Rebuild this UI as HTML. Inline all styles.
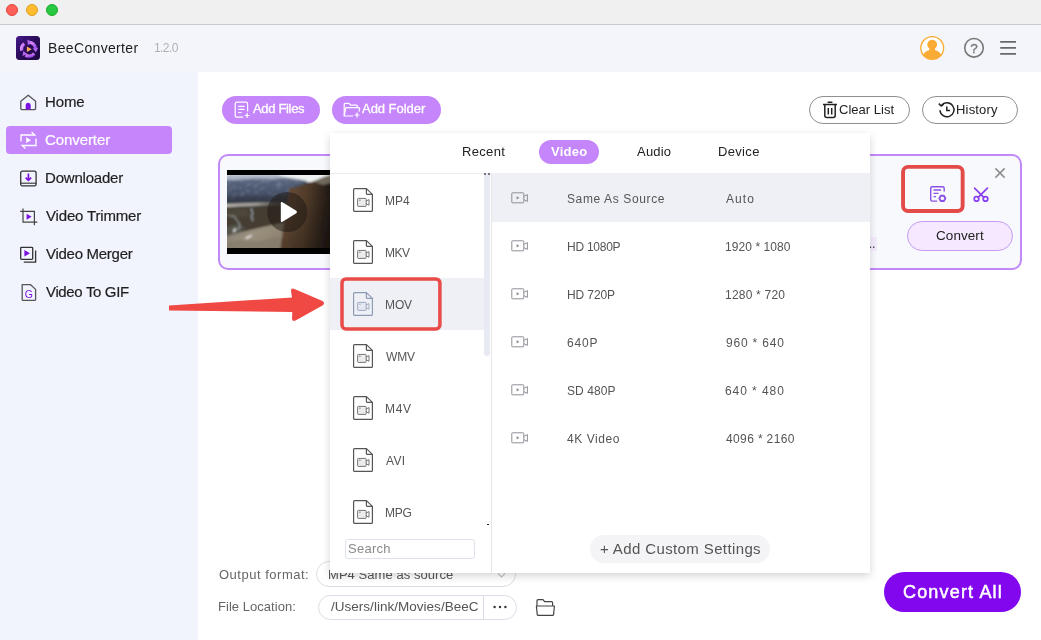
<!DOCTYPE html>
<html lang="en">
<head>
<meta charset="utf-8">
<title>BeeConverter</title>
<style>
*{box-sizing:border-box;margin:0;padding:0}
html,body{width:1041px;height:640px;overflow:hidden;background:#fff}
body{position:relative;font-family:"Liberation Sans",sans-serif;color:#222}
.a{position:absolute}
svg.g{will-change:transform}
.t{position:absolute;white-space:nowrap;line-height:20px;height:20px;will-change:transform}
#titlebar{left:0;top:0;width:1041px;height:25px;background:#f0f0f0;border-bottom:1px solid #c9c9ce}
.tl{position:absolute;top:4px;width:12px;height:12px;border-radius:50%}
#header{left:0;top:25px;width:1041px;height:47px;background:#f4f5fa}
#sidebar{left:0;top:72px;width:198px;height:568px;background:#f2f4fd}
#main{left:198px;top:72px;width:843px;height:568px;background:#fff}
.pill{position:absolute;border-radius:14px;height:28px}
.btnp{background:#c586fb}
.btno{background:#fff;border:1px solid #8f8f8f}
#card{left:218px;top:154px;width:804px;height:116px;border:2px solid #c388f8;border-radius:10px;background:#f8f9fc}
#popup{left:330px;top:133px;width:540px;height:440px;background:#fff;box-shadow:0 3px 8px rgba(0,0,0,.17)}
</style>
</head>
<body>
<div id="titlebar" class="a">
  <div class="tl" style="left:6px;background:#fe5f57;border:0.5px solid #e0443e"></div>
  <div class="tl" style="left:26px;background:#febc2e;border:0.5px solid #dea123"></div>
  <div class="tl" style="left:46px;background:#28c840;border:0.5px solid #1aab29"></div>
</div>
<div id="header" class="a"></div>
<div id="sidebar" class="a"></div>
<div id="main" class="a"></div>
<svg class="a" style="left:16px;top:36px" width="24" height="24" viewBox="0 0 24 24">
  <defs>
    <linearGradient id="lg0" x1="0" y1="0" x2="1" y2="1"><stop offset="0" stop-color="#45188a"/><stop offset="0.5" stop-color="#2a0c58"/><stop offset="1" stop-color="#1c0840"/></linearGradient>
    <linearGradient id="lg1" x1="0" y1="0" x2="1" y2="1"><stop offset="0" stop-color="#ee9cff"/><stop offset="1" stop-color="#9448e4"/></linearGradient>
  </defs>
  <rect width="24" height="24" rx="3.500" fill="url(#lg0)"/>
  <g transform="translate(0.3 0.6)"><g fill="none" stroke="url(#lg1)" stroke-width="3.300">
    <path d="M12.600 5.800 A6.800 6.800 0 0 1 19.200 11.600"/>
    <path d="M17.900 16.800 A6.800 6.800 0 0 1 9.200 18.600"/>
    <path d="M5.400 14 A6.800 6.800 0 0 1 8 7.200"/>
  </g>
  <path d="M11 3 L15.200 5.400 L11.600 8.600 Z M21.800 11.200 L19.600 15.600 L16.400 12 Z M6.200 19.400 L7 14.400 L11 17.400 Z" fill="#b565f0"/>
  <path d="M10.600 9.900 L15.400 12.600 L10.600 15.300 Z" fill="#ffae5a"/></g>
</svg>
<div class="t" style="left:48px;top:37.8px;font-size:14px;color:#1c1c1c;letter-spacing:0.34px;">BeeConverter</div>
<div class="t" style="left:154px;top:37.8px;font-size:12px;color:#b0b0b5;letter-spacing:-0.57px;">1.2.0</div>
<svg class="a" style="left:919px;top:35px" width="26" height="26" viewBox="0 0 26 26">
  <defs><clipPath id="uc"><circle cx="13.2" cy="13" r="11.4"/></clipPath></defs>
  <circle cx="13.2" cy="13" r="11.4" fill="#fff"/>
  <g clip-path="url(#uc)" fill="#f9ab35">
    <circle cx="13.2" cy="9.600" r="4.900"/>
    <path d="M10.400 12 H16 V15 C19.500 16 23 18 24.400 26 H2 C3.400 18 6.900 16 10.400 15 Z"/>
  </g>
  <circle cx="13.2" cy="13" r="11.4" fill="none" stroke="#f9ab35" stroke-width="1.350"/>
</svg>
<svg class="a g" style="left:963px;top:37px" width="22" height="22" viewBox="0 0 22 22">
  <circle cx="11" cy="10.8" r="9.3" fill="none" stroke="#777" stroke-width="1.6"/>
  <text x="11" y="15.700" font-family="Liberation Sans, sans-serif" font-size="13.5" fill="#777" stroke="#777" stroke-width="0.300" text-anchor="middle">?</text>
</svg>
<svg class="a" style="left:999px;top:39px" width="19" height="18" viewBox="0 0 19 18">
  <path d="M1.2 2.8 H17 M1.2 8.8 H17 M1.2 14.8 H17" stroke="#686868" stroke-width="1.800"/>
</svg>
<div class="a" style="left:6px;top:126px;width:166px;height:28px;border-radius:4px;background:#c586fb"></div>
<div class="t" style="left:45px;top:92.0px;font-size:15px;color:#1f1f1f;letter-spacing:-0.10px;-webkit-text-stroke:0.2px #1f1f1f;">Home</div>
<div class="t" style="left:45px;top:130.0px;font-size:15px;color:#fff;letter-spacing:-0.09px;-webkit-text-stroke:0.2px #fff;">Converter</div>
<div class="t" style="left:45px;top:168.0px;font-size:15px;color:#1f1f1f;letter-spacing:-0.20px;-webkit-text-stroke:0.2px #1f1f1f;">Downloader</div>
<div class="t" style="left:46px;top:206.0px;font-size:15px;color:#1f1f1f;letter-spacing:-0.17px;-webkit-text-stroke:0.2px #1f1f1f;">Video Trimmer</div>
<div class="t" style="left:46px;top:244.0px;font-size:15px;color:#1f1f1f;letter-spacing:-0.28px;-webkit-text-stroke:0.2px #1f1f1f;">Video Merger</div>
<div class="t" style="left:46px;top:282.0px;font-size:15px;color:#1f1f1f;letter-spacing:-0.35px;-webkit-text-stroke:0.2px #1f1f1f;">Video To GIF</div>
<svg class="a" style="left:19px;top:93px" width="19" height="19" viewBox="0 0 19 19" fill="none">
  <path d="M1.8 8.2 L9.2 2.2 L16.6 8.2 V15.6 Q16.6 16.6 15.6 16.6 H2.8 Q1.8 16.6 1.8 15.6 Z" stroke="#555" stroke-width="1.3" stroke-linejoin="round"/>
  <path d="M6.7 16.6 V12.2 A2.5 2.5 0 0 1 11.7 12.2 V16.6 Z" fill="#7a12e0"/>
</svg>
<svg class="a" style="left:19px;top:130px" width="19" height="20" viewBox="0 0 19 20" fill="none" stroke="#fff" stroke-width="1.3">
  <path d="M2 11.5 V5 H15.5 M12.6 2 L15.8 5 L12.6 5"/>
  <path d="M17 8.5 V15.5 H3.5 M6.4 18.5 L3.2 15.5 L6.4 15.5"/>
  <path d="M7.2 7.3 L12 10.2 L7.2 13.1 Z" fill="#fff" stroke="none"/>
</svg>
<svg class="a" style="left:19px;top:169px" width="19" height="19" viewBox="0 0 19 19" fill="none">
  <rect x="1.7" y="2.2" width="15.4" height="14.6" rx="1.6" stroke="#333" stroke-width="1.3"/>
  <path d="M1.7 14.2 H17.1" stroke="#333" stroke-width="1.1"/>
  <path d="M9.4 4.6 V11 M6.6 8.6 L9.4 11.4 L12.2 8.6" stroke="#7a12e0" stroke-width="1.7"/>
</svg>
<svg class="a" style="left:19px;top:207px" width="20" height="20" viewBox="0 0 20 20" fill="none">
  <path d="M4 1.5 V15.2 H18.3 M1.2 4.3 H15.4 V18.2" stroke="#444" stroke-width="1.2"/>
  <path d="M7.6 6.8 L12.6 9.8 L7.6 12.8 Z" fill="#7a12e0"/>
</svg>
<svg class="a" style="left:19px;top:245px" width="19" height="19" viewBox="0 0 19 19" fill="none">
  <rect x="1.7" y="2.3" width="12" height="12" rx="0.8" stroke="#333" stroke-width="1.3"/>
  <path d="M16.6 5.5 V17.2 H4.8" stroke="#333" stroke-width="1.3"/>
  <path d="M5.4 5 L11 8.3 L5.4 11.6 Z" fill="#7a12e0"/>
</svg>
<svg class="a g" style="left:20px;top:283px" width="18" height="19" viewBox="0 0 18 19" fill="none">
  <path d="M2.2 1.7 H10.6 L15.6 6.4 V16.4 Q15.6 17.4 14.6 17.4 H3.2 Q2.2 17.4 2.2 16.4 Z" stroke="#555" stroke-width="1.3" stroke-linejoin="round"/>
  <text x="8.9" y="14.6" font-family="Liberation Sans, sans-serif" font-size="10.5" fill="#7a12e0" stroke="none" text-anchor="middle">G</text>
</svg>
<div class="pill btnp" style="left:222px;top:96px;width:98px"></div>
<div class="pill btnp" style="left:332px;top:96px;width:109px"></div>
<div class="pill btno" style="left:809px;top:96px;width:101px"></div>
<div class="pill btno" style="left:922px;top:96px;width:96px"></div>
<div class="t" style="left:253px;top:99.4px;font-size:13px;color:#fff;letter-spacing:-0.33px;-webkit-text-stroke:0.3px #fff;">Add Files</div>
<div class="t" style="left:362px;top:99.4px;font-size:13px;color:#fff;letter-spacing:-0.03px;-webkit-text-stroke:0.3px #fff;">Add Folder</div>
<div class="t" style="left:839px;top:99.8px;font-size:13px;color:#222;letter-spacing:0.02px;">Clear List</div>
<div class="t" style="left:956px;top:99.8px;font-size:13px;color:#222;letter-spacing:0.18px;">History</div>
<svg class="a" style="left:234px;top:101px" width="17" height="18" viewBox="0 0 17 18" fill="none" stroke="#fff" stroke-width="1.2">
  <path d="M9.2 16.2 H3 Q1.2 16.2 1.2 14.4 V3 Q1.2 1.2 3 1.2 H11.8 Q13.6 1.2 13.6 3 V10.4"/>
  <path d="M4.2 5.3 H10.6 M4.2 8.4 H10.6 M4.2 11.5 H7.6"/>
  <path d="M13.2 12 V17 M10.7 14.5 H15.7"/>
</svg>
<svg class="a" style="left:343px;top:102px" width="18" height="16" viewBox="0 0 18 16" fill="none" stroke="#fff" stroke-width="1.2" stroke-linejoin="round">
  <path d="M1.2 13.8 V2.4 Q1.2 1.4 2.2 1.4 H6 L7.6 3.2 H13.4 Q14.4 3.2 14.4 4.2 V5.6"/>
  <path d="M10.2 14 H1.2 L2.6 6.6 Q2.8 5.6 3.8 5.6 H15.6 Q16.8 5.6 16.6 6.6 L16 9.6"/>
  <path d="M14 10.6 V15.4 M11.6 13 H16.4"/>
</svg>
<svg class="a" style="left:822px;top:101px" width="16" height="18" viewBox="0 0 16 18" fill="none" stroke="#222" stroke-width="1.500">
  <path d="M1 3.6 H15 M5.6 1.2 H10.4"/>
  <path d="M2.8 3.6 V14.6 Q2.8 16.6 4.8 16.6 H11.2 Q13.2 16.6 13.2 14.6 V3.6"/>
  <path d="M6.3 7 V13.4 M9.7 7 V13.4"/>
</svg>
<svg class="a" style="left:938px;top:101px" width="18" height="18" viewBox="0 0 18 18" fill="none" stroke="#222" stroke-width="1.500">
  <path d="M3.4 4.6 A7 7 0 1 1 2 9.2"/>
  <path d="M0.8 2.6 L3.2 5 L5.8 3.2" />
  <path d="M8.8 5.4 V9.6 H12"/>
</svg>
<div id="card" class="a"></div>
<svg class="a" style="left:227px;top:170px" width="110" height="84" viewBox="0 0 110 84">
  <defs>
    <linearGradient id="mt" x1="0" y1="0" x2="0" y2="1"><stop offset="0" stop-color="#8a94aa"/><stop offset="0.22" stop-color="#55617a"/><stop offset="0.7" stop-color="#434e64"/><stop offset="1" stop-color="#343c49"/></linearGradient>
    <linearGradient id="cl" x1="0" y1="0" x2="1" y2="0.12"><stop offset="0" stop-color="#4e3b2c"/><stop offset="0.22" stop-color="#684d37"/><stop offset="0.5" stop-color="#503b2a"/><stop offset="0.78" stop-color="#2a2019"/><stop offset="1" stop-color="#15110e"/></linearGradient>
    <linearGradient id="cd" x1="0" y1="0" x2="0" y2="1"><stop offset="0" stop-color="#000" stop-opacity="0"/><stop offset="1" stop-color="#000" stop-opacity=".22"/></linearGradient>
    <linearGradient id="sl" x1="0" y1="0" x2="1" y2="0.6"><stop offset="0" stop-color="#77736a"/><stop offset="0.5" stop-color="#9a907e"/><stop offset="1" stop-color="#8b806e"/></linearGradient>
    <linearGradient id="bd" x1="0" y1="0" x2="1" y2="0"><stop offset="0" stop-color="#b9b5ac"/><stop offset="0.55" stop-color="#a29e96"/><stop offset="0.75" stop-color="#6a665e"/><stop offset="1" stop-color="#4c4942"/></linearGradient>
    <filter id="bl" x="-5%" y="-5%" width="110%" height="110%"><feGaussianBlur stdDeviation="1.05"/></filter>
    <filter id="nz" x="0" y="0" width="100%" height="100%"><feTurbulence type="fractalNoise" baseFrequency="0.22 0.3" numOctaves="3" seed="11"/><feColorMatrix type="matrix" values="0 0 0 0 0.85  0 0 0 0 0.88  0 0 0 0 0.95  1.6 0 0 0 -0.78"/></filter>
    <filter id="nd" x="0" y="0" width="100%" height="100%"><feTurbulence type="fractalNoise" baseFrequency="0.5 0.12" numOctaves="2" seed="3"/><feColorMatrix type="matrix" values="0 0 0 0 0.05  0 0 0 0 0.03  0 0 0 0 0.02  1.5 0 0 0 -0.7"/></filter>
    <clipPath id="tc"><rect x="0" y="5" width="110" height="73"/></clipPath>
    <clipPath id="mc"><path d="M-4 4 L58 4 L80 11 L62 19 L61 33 L-4 34 Z"/></clipPath>
    <clipPath id="cc"><path d="M53 84 L55 66 L57 53 L60.600 32.400 L62 20 L62.500 17.500 L64 18.500 L65.500 17 L67 18 L75 15.200 L87.400 11 L97 7 L102.500 5.600 L114 3 L114 84 Z"/></clipPath>
  </defs>
  <rect width="110" height="84" fill="#000"/>
  <g clip-path="url(#tc)"><g filter="url(#bl)">
    <rect x="-4" y="2" width="118" height="80" fill="#414a5c"/>
    <rect x="-4" y="2" width="118" height="10" fill="#eef2f2"/>
    <path d="M-4 6.500 L20 5.500 L45 5.500 L56 7 L70 9 L80.500 11 L62.600 18.600 L61 33 L-4 34 Z" fill="url(#mt)"/>
    <path d="M-4 4 L50 4 L58 7.500 L44 9 L26 8.500 L10 10 L-4 10.500 Z" fill="#b3bbca" opacity=".85"/>
    <g clip-path="url(#mc)"><rect x="0" y="5" width="82" height="24" filter="url(#nz)" opacity=".42"/></g>
    <path d="M-4 27 L61 25 L61 33 L-4 34 Z" fill="#343b48" opacity=".7"/>
    <path d="M-4 34 L30 32.800 L42 32.600 L61 32.400 L61 35 L42 35 L-4 37.200 Z" fill="url(#bd)"/>
    <path d="M-4 37.500 L42 35.500 L61 35.500 L61 84 L-4 84 Z" fill="#443e33"/>
    <path d="M-4 40 L20 38 L22 46 L8 48 L-4 46 Z" fill="#565043" opacity=".5"/>
    <path d="M-4 66.500 L12 62.500 L36 57 L57 52.500 L58 84 L-4 84 Z" fill="url(#sl)"/>
    <path d="M-4 58 L8 54.500 L18 57 L14 61.500 L-4 66.500 Z" fill="#54544b"/>
    <path d="M-4 74 L12 70 L30 72 L52 66 L56 84 L-4 84 Z" fill="#857c6b" opacity=".8"/>
    <path d="M6 45 L9 49 L12 53 L13 57 L10 60" stroke="#a2aab0" stroke-width="1" fill="none"/>
    <path d="M24 38 L25.500 43 L24.500 47 L26 51" stroke="#98a0a6" stroke-width="1.300" fill="none"/>
    <path d="M1 45 L6 47" stroke="#8a9298" stroke-width=".9" fill="none"/>
    <path d="M8.500 58.500 L6.500 62" stroke="#e8eaea" stroke-width="1.700" fill="none"/>
    <path d="M18.600 68.500 L24.800 65.300" stroke="#ecebe8" stroke-width="1.500" fill="none"/>
    <g clip-path="url(#cc)">
      <rect x="50" y="0" width="64" height="84" fill="url(#cl)"/>
      <rect x="50" y="30" width="64" height="54" fill="url(#cd)"/>
      <rect x="52" y="10" width="60" height="70" filter="url(#nd)" opacity=".45"/>
      <path d="M86 11.500 L97 7 L102.500 5.600 L114 3 L114 14 L104 13 L96 15 Z" fill="#716a5e"/>
      <path d="M63 19 L61.500 33 L58 53 L55.500 68" stroke="#6b523c" stroke-width="1.400" fill="none" opacity=".8"/>
    </g>
  </g></g>
  <circle cx="60.200" cy="42" r="20" fill="#1c1512" opacity=".5"/>
  <path d="M53.800 33.200 Q53.800 31.300 55.500 32.200 L69.300 40.700 Q70.700 42 69.300 43.300 L55.500 51.800 Q53.800 52.700 53.800 50.800 Z" fill="#fff"/>
</svg>
<div class="a" style="left:862px;top:237px;width:15px;height:13.500px;background:#f5edfd"></div>
<div class="t" style="left:866px;top:235.2px;font-size:9px;color:#3a3a3a;letter-spacing:0.79px;font-weight:bold;">...</div>
<svg class="a" style="left:899px;top:163px" width="68" height="52" viewBox="0 0 68 52"><rect x="4.050" y="3.850" width="59.600" height="44.200" rx="5" fill="none" stroke="#e34b49" stroke-width="3.900"/></svg>
<svg class="a" style="left:929px;top:185px" width="19" height="19" viewBox="0 0 19 19" fill="none" stroke="#8b50e5" stroke-width="1.400">
  <path d="M8.200 16.100 H3.300 Q1.700 16.100 1.700 14.500 V3.400 Q1.700 1.800 3.300 1.800 H13.600 Q15.200 1.800 15.200 3.400 V6.600"/>
  <path d="M4.500 5 H12 M4.500 8.300 H9.500 M4.500 11.600 H7" stroke-width="1.300"/>
  <path d="M10.300 13.400 L11.800 10.800 H14.900 L16.400 13.400 L14.900 16 H11.800 Z" stroke-width="1.900" stroke-linejoin="round"/>
</svg>
<svg class="a" style="left:972px;top:186px" width="18" height="18" viewBox="0 0 18 18" fill="none" stroke="#8a40f0" stroke-width="1.700" stroke-linecap="round">
  <path d="M2.600 2.200 L11.800 11.400 M15.400 2.200 L6.200 11.400"/>
  <circle cx="4.500" cy="12.900" r="2.300"/>
  <circle cx="13.500" cy="12.900" r="2.300"/>
</svg>
<svg class="a" style="left:994px;top:167px" width="12" height="12" viewBox="0 0 12 12" fill="none" stroke="#8f8f8f" stroke-width="1.600">
  <path d="M1.400 1.400 L10.600 10.600 M10.600 1.400 L1.400 10.600"/>
</svg>
<div class="a" style="left:907px;top:220.500px;width:106px;height:30.500px;border-radius:16px;background:#f5e8ff;border:1px solid #c79cf0"></div>
<div class="t" style="left:936px;top:225.8px;font-size:13.5px;color:#222;letter-spacing:0.06px;">Convert</div>
<div class="t" style="left:219px;top:565.0px;font-size:13px;color:#666;letter-spacing:0.51px;">Output format:</div>
<div class="t" style="left:218px;top:597.0px;font-size:13px;color:#666;letter-spacing:0.04px;">File Location:</div>
<div class="a" style="left:315.500px;top:561px;width:200px;height:26px;border-radius:13px;border:1px solid #dcdce6;background:#fff"></div>
<div class="t" style="left:328px;top:565.0px;font-size:13px;color:#555;letter-spacing:0.06px;">MP4 Same as source</div>
<svg class="a" style="left:497px;top:572px" width="9" height="7" viewBox="0 0 9 7" fill="none" stroke="#c4c4c8" stroke-width="1.100"><path d="M1 1.500 L4.500 5 L8 1.500"/></svg>
<div class="a" style="left:318px;top:594.500px;width:199px;height:25px;border-radius:12.500px;border:1px solid #dcdce6;background:#fff"></div>
<div class="a" style="left:483px;top:595px;width:1px;height:24px;background:#dcdce6"></div>
<div class="t" style="left:331px;top:597.0px;font-size:13.5px;color:#555;letter-spacing:0.02px;">/Users/link/Movies/BeeC</div>
<svg class="a" style="left:492px;top:604px" width="16" height="6" viewBox="0 0 16 6" fill="#333"><circle cx="2.600" cy="3" r="1.200"/><circle cx="8" cy="3" r="1.200"/><circle cx="13.400" cy="3" r="1.200"/></svg>
<svg class="a" style="left:535px;top:598px" width="21" height="19" viewBox="0 0 21 19" fill="none" stroke="#444" stroke-width="1.200" stroke-linejoin="round">
  <path d="M2 8 V2.800 Q2 1.600 3.200 1.600 H8 L9.600 3.600 H16.400 Q17.600 3.600 17.600 4.800 V8"/>
  <path d="M1.400 8 H19.400 L18.600 16.400 Q18.500 17.400 17.500 17.400 H3.300 Q2.300 17.400 2.200 16.400 Z"/>
</svg>
<div class="a" style="left:884px;top:572px;width:137px;height:40px;border-radius:20px;background:#8206ee"></div>
<div class="t" style="left:903px;top:581.8px;font-size:18px;color:#fff;letter-spacing:1.17px;-webkit-text-stroke:0.5px #fff;">Convert All</div>
<svg class="a" style="left:160px;top:280px" width="175" height="50" viewBox="0 0 175 50">
  <path d="M9 25.500 L132 17.500 L131 11 Q131 7.500 134.500 9 L162.500 21 Q165.500 23.200 162.500 25.500 L135.500 40.500 Q132 42 132 38.500 L132.300 32 L9 30.500 Z" fill="#f04944"/>
</svg>
<div id="popup" class="a"></div>
<div class="a" style="left:330px;top:173px;width:540px;height:1px;background:#ececf0"></div>
<div class="t" style="left:462px;top:141.5px;font-size:13px;color:#222;letter-spacing:0.32px;">Recent</div>
<div class="a" style="left:539px;top:140px;width:60px;height:24px;border-radius:12px;background:#c586fb"></div>
<div class="t" style="left:551px;top:141.5px;font-size:13px;color:#fff;letter-spacing:0.25px;font-weight:bold;">Video</div>
<div class="t" style="left:637px;top:141.5px;font-size:13px;color:#222;letter-spacing:0.21px;">Audio</div>
<div class="t" style="left:718px;top:141.5px;font-size:13px;color:#222;letter-spacing:0.33px;">Device</div>
<div class="a" style="left:330px;top:278px;width:154px;height:52px;background:#eef0f6"></div>
<svg class="a" style="left:352px;top:187px" width="22" height="26" viewBox="0 0 22 26" fill="none" stroke="#555" stroke-width="1.200" stroke-linejoin="round">
  <path d="M2.600 1.600 H14.400 L20.400 7.400 V23.400 Q20.400 24.400 19.400 24.400 H2.600 Q1.600 24.400 1.600 23.400 V2.600 Q1.600 1.600 2.600 1.600 Z"/>
  <path d="M14.400 1.600 V6.400 Q14.400 7.400 15.400 7.400 H20.400"/>
  <rect x="5.600" y="11.400" width="8.600" height="8" rx="0.800" fill="#ececec" stroke-width="1" stroke-opacity=".8"/>
  <path d="M14.200 14 L17 12.600 V18.200 L14.200 16.800" stroke-width="1" stroke-opacity=".8"/>
  <path d="M7.200 13.200 H8.600" stroke-width="0.800"/>
</svg>
<div class="t" style="left:385px;top:190.8px;font-size:12px;color:#555;letter-spacing:-0.03px;">MP4</div>
<svg class="a" style="left:352px;top:239px" width="22" height="26" viewBox="0 0 22 26" fill="none" stroke="#555" stroke-width="1.200" stroke-linejoin="round">
  <path d="M2.600 1.600 H14.400 L20.400 7.400 V23.400 Q20.400 24.400 19.400 24.400 H2.600 Q1.600 24.400 1.600 23.400 V2.600 Q1.600 1.600 2.600 1.600 Z"/>
  <path d="M14.400 1.600 V6.400 Q14.400 7.400 15.400 7.400 H20.400"/>
  <rect x="5.600" y="11.400" width="8.600" height="8" rx="0.800" fill="#ececec" stroke-width="1" stroke-opacity=".8"/>
  <path d="M14.200 14 L17 12.600 V18.200 L14.200 16.800" stroke-width="1" stroke-opacity=".8"/>
  <path d="M7.200 13.200 H8.600" stroke-width="0.800"/>
</svg>
<div class="t" style="left:385px;top:242.8px;font-size:12px;color:#555;letter-spacing:-0.46px;">MKV</div>
<svg class="a" style="left:352px;top:291px" width="22" height="26" viewBox="0 0 22 26" fill="none" stroke="#8d9bb5" stroke-width="1.200" stroke-linejoin="round">
  <path d="M2.600 1.600 H14.400 L20.400 7.400 V23.400 Q20.400 24.400 19.400 24.400 H2.600 Q1.600 24.400 1.600 23.400 V2.600 Q1.600 1.600 2.600 1.600 Z"/>
  <path d="M14.400 1.600 V6.400 Q14.400 7.400 15.400 7.400 H20.400"/>
  <rect x="5.600" y="11.400" width="8.600" height="8" rx="0.800" fill="#e3e8f2" stroke-width="1" stroke-opacity=".8"/>
  <path d="M14.200 14 L17 12.600 V18.200 L14.200 16.800" stroke-width="1" stroke-opacity=".8"/>
  <path d="M7.200 13.200 H8.600" stroke-width="0.800"/>
</svg>
<div class="t" style="left:385px;top:294.8px;font-size:12px;color:#555;letter-spacing:-0.12px;">MOV</div>
<svg class="a" style="left:352px;top:343px" width="22" height="26" viewBox="0 0 22 26" fill="none" stroke="#555" stroke-width="1.200" stroke-linejoin="round">
  <path d="M2.600 1.600 H14.400 L20.400 7.400 V23.400 Q20.400 24.400 19.400 24.400 H2.600 Q1.600 24.400 1.600 23.400 V2.600 Q1.600 1.600 2.600 1.600 Z"/>
  <path d="M14.400 1.600 V6.400 Q14.400 7.400 15.400 7.400 H20.400"/>
  <rect x="5.600" y="11.400" width="8.600" height="8" rx="0.800" fill="#ececec" stroke-width="1" stroke-opacity=".8"/>
  <path d="M14.200 14 L17 12.600 V18.200 L14.200 16.800" stroke-width="1" stroke-opacity=".8"/>
  <path d="M7.200 13.200 H8.600" stroke-width="0.800"/>
</svg>
<div class="t" style="left:386px;top:346.8px;font-size:12px;color:#555;letter-spacing:-0.14px;">WMV</div>
<svg class="a" style="left:352px;top:395px" width="22" height="26" viewBox="0 0 22 26" fill="none" stroke="#555" stroke-width="1.200" stroke-linejoin="round">
  <path d="M2.600 1.600 H14.400 L20.400 7.400 V23.400 Q20.400 24.400 19.400 24.400 H2.600 Q1.600 24.400 1.600 23.400 V2.600 Q1.600 1.600 2.600 1.600 Z"/>
  <path d="M14.400 1.600 V6.400 Q14.400 7.400 15.400 7.400 H20.400"/>
  <rect x="5.600" y="11.400" width="8.600" height="8" rx="0.800" fill="#ececec" stroke-width="1" stroke-opacity=".8"/>
  <path d="M14.200 14 L17 12.600 V18.200 L14.200 16.800" stroke-width="1" stroke-opacity=".8"/>
  <path d="M7.200 13.200 H8.600" stroke-width="0.800"/>
</svg>
<div class="t" style="left:385px;top:398.8px;font-size:12px;color:#555;letter-spacing:0.70px;">M4V</div>
<svg class="a" style="left:352px;top:447px" width="22" height="26" viewBox="0 0 22 26" fill="none" stroke="#555" stroke-width="1.200" stroke-linejoin="round">
  <path d="M2.600 1.600 H14.400 L20.400 7.400 V23.400 Q20.400 24.400 19.400 24.400 H2.600 Q1.600 24.400 1.600 23.400 V2.600 Q1.600 1.600 2.600 1.600 Z"/>
  <path d="M14.400 1.600 V6.400 Q14.400 7.400 15.400 7.400 H20.400"/>
  <rect x="5.600" y="11.400" width="8.600" height="8" rx="0.800" fill="#ececec" stroke-width="1" stroke-opacity=".8"/>
  <path d="M14.200 14 L17 12.600 V18.200 L14.200 16.800" stroke-width="1" stroke-opacity=".8"/>
  <path d="M7.200 13.200 H8.600" stroke-width="0.800"/>
</svg>
<div class="t" style="left:386px;top:450.8px;font-size:12px;color:#555;letter-spacing:0.30px;">AVI</div>
<svg class="a" style="left:352px;top:499px" width="22" height="26" viewBox="0 0 22 26" fill="none" stroke="#555" stroke-width="1.200" stroke-linejoin="round">
  <path d="M2.600 1.600 H14.400 L20.400 7.400 V23.400 Q20.400 24.400 19.400 24.400 H2.600 Q1.600 24.400 1.600 23.400 V2.600 Q1.600 1.600 2.600 1.600 Z"/>
  <path d="M14.400 1.600 V6.400 Q14.400 7.400 15.400 7.400 H20.400"/>
  <rect x="5.600" y="11.400" width="8.600" height="8" rx="0.800" fill="#ececec" stroke-width="1" stroke-opacity=".8"/>
  <path d="M14.200 14 L17 12.600 V18.200 L14.200 16.800" stroke-width="1" stroke-opacity=".8"/>
  <path d="M7.200 13.200 H8.600" stroke-width="0.800"/>
</svg>
<div class="t" style="left:385px;top:502.8px;font-size:12px;color:#555;letter-spacing:-0.26px;">MPG</div>
<svg class="a" style="left:338px;top:275px" width="106" height="58" viewBox="0 0 106 58"><rect x="4" y="3.900" width="97.900" height="50" rx="4" fill="none" stroke="#e94b48" stroke-width="3.500"/></svg>
<div class="a" style="left:484px;top:173px;width:5.500px;height:183px;border-radius:0 0 3px 3px;background:#e8eaf3"></div>
<div class="a" style="left:491px;top:174px;width:1px;height:399px;background:#e6e6ea"></div>
<div class="a" style="left:484px;top:173px;width:1.500px;height:2px;background:#777"></div><div class="a" style="left:488px;top:173px;width:1.500px;height:2px;background:#777"></div>
<div class="a" style="left:486.500px;top:524px;width:2px;height:1.200px;background:#222"></div>
<div class="a" style="left:345px;top:538.500px;width:130px;height:20px;border:1px solid #dde2ec;border-radius:3px;background:#fff"></div>
<div class="t" style="left:348px;top:538.5px;font-size:13px;color:#8a8a8a;letter-spacing:0.28px;">Search</div>
<div class="a" style="left:492px;top:173px;width:378px;height:48.500px;background:#eef0f6"></div>
<svg class="a" style="left:510.500px;top:192px" width="18" height="12" viewBox="0 0 18 12" fill="none" stroke="#8e9098" stroke-width="1">
  <rect x="0.800" y="0.800" width="12" height="10" rx="0.600"/>
  <path d="M12.800 4.400 L16.400 2.600 V9.400 L12.800 7.600"/>
  <path d="M5.600 4.200 L8.400 5.800 L5.600 7.400 Z" fill="#888" stroke="none"/>
</svg>
<div class="t" style="left:567px;top:188.8px;font-size:12px;color:#555;letter-spacing:0.62px;">Same As Source</div>
<div class="t" style="left:726px;top:188.8px;font-size:12px;color:#555;letter-spacing:1.09px;">Auto</div>
<svg class="a" style="left:510.500px;top:240px" width="18" height="12" viewBox="0 0 18 12" fill="none" stroke="#8e9098" stroke-width="1">
  <rect x="0.800" y="0.800" width="12" height="10" rx="0.600"/>
  <path d="M12.800 4.400 L16.400 2.600 V9.400 L12.800 7.600"/>
  <path d="M5.600 4.200 L8.400 5.800 L5.600 7.400 Z" fill="#888" stroke="none"/>
</svg>
<div class="t" style="left:567px;top:236.8px;font-size:12px;color:#555;letter-spacing:-0.26px;">HD 1080P</div>
<div class="t" style="left:725px;top:236.8px;font-size:12px;color:#555;letter-spacing:0.07px;">1920 * 1080</div>
<svg class="a" style="left:510.500px;top:288px" width="18" height="12" viewBox="0 0 18 12" fill="none" stroke="#8e9098" stroke-width="1">
  <rect x="0.800" y="0.800" width="12" height="10" rx="0.600"/>
  <path d="M12.800 4.400 L16.400 2.600 V9.400 L12.800 7.600"/>
  <path d="M5.600 4.200 L8.400 5.800 L5.600 7.400 Z" fill="#888" stroke="none"/>
</svg>
<div class="t" style="left:567px;top:284.8px;font-size:12px;color:#555;letter-spacing:-0.10px;">HD 720P</div>
<div class="t" style="left:725px;top:284.8px;font-size:12px;color:#555;letter-spacing:0.21px;">1280 * 720</div>
<svg class="a" style="left:510.500px;top:336px" width="18" height="12" viewBox="0 0 18 12" fill="none" stroke="#8e9098" stroke-width="1">
  <rect x="0.800" y="0.800" width="12" height="10" rx="0.600"/>
  <path d="M12.800 4.400 L16.400 2.600 V9.400 L12.800 7.600"/>
  <path d="M5.600 4.200 L8.400 5.800 L5.600 7.400 Z" fill="#888" stroke="none"/>
</svg>
<div class="t" style="left:567px;top:332.8px;font-size:12px;color:#555;letter-spacing:0.84px;">640P</div>
<div class="t" style="left:726px;top:332.8px;font-size:12px;color:#555;letter-spacing:0.81px;">960 * 640</div>
<svg class="a" style="left:510.500px;top:384px" width="18" height="12" viewBox="0 0 18 12" fill="none" stroke="#8e9098" stroke-width="1">
  <rect x="0.800" y="0.800" width="12" height="10" rx="0.600"/>
  <path d="M12.800 4.400 L16.400 2.600 V9.400 L12.800 7.600"/>
  <path d="M5.600 4.200 L8.400 5.800 L5.600 7.400 Z" fill="#888" stroke="none"/>
</svg>
<div class="t" style="left:567px;top:380.8px;font-size:12px;color:#555;letter-spacing:0.08px;">SD 480P</div>
<div class="t" style="left:725px;top:380.8px;font-size:12px;color:#555;letter-spacing:0.94px;">640 * 480</div>
<svg class="a" style="left:510.500px;top:432px" width="18" height="12" viewBox="0 0 18 12" fill="none" stroke="#8e9098" stroke-width="1">
  <rect x="0.800" y="0.800" width="12" height="10" rx="0.600"/>
  <path d="M12.800 4.400 L16.400 2.600 V9.400 L12.800 7.600"/>
  <path d="M5.600 4.200 L8.400 5.800 L5.600 7.400 Z" fill="#888" stroke="none"/>
</svg>
<div class="t" style="left:567px;top:428.8px;font-size:12px;color:#555;letter-spacing:0.57px;">4K Video</div>
<div class="t" style="left:726px;top:428.8px;font-size:12px;color:#555;letter-spacing:0.37px;">4096 * 2160</div>
<div class="a" style="left:590px;top:535px;width:180px;height:28px;border-radius:14px;background:#f4f4f6"></div>
<div class="t" style="left:600px;top:538.5px;font-size:15px;color:#555;letter-spacing:0.38px;">+ Add Custom Settings</div>
</body>
</html>
